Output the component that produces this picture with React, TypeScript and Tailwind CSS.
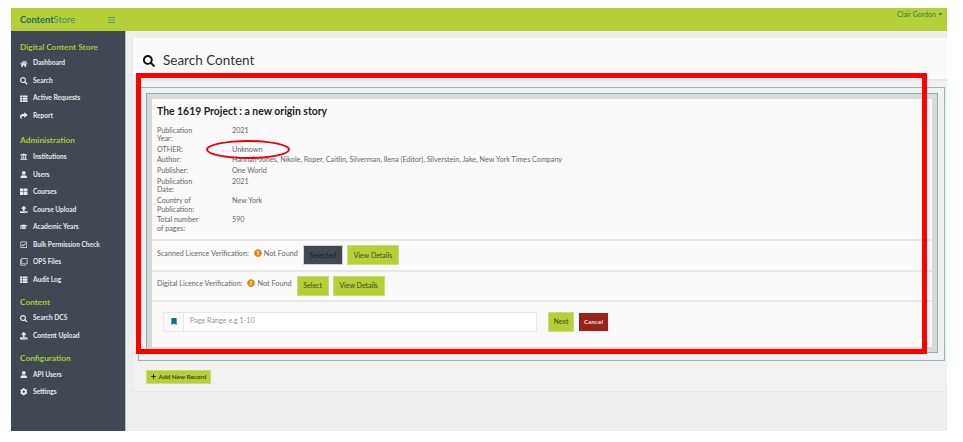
import {
  FaBars,
  FaBookmark,
  FaCaretDown,
  FaCog,
  FaExclamationCircle,
  FaGraduationCap,
  FaHome,
  FaPlus,
  FaRegCheckSquare,
  FaRegClone,
  FaSearch,
  FaShare,
  FaThLarge,
  FaThList,
  FaUniversity,
  FaUpload,
  FaUser,
} from 'react-icons/fa'
import type { IconType } from 'react-icons'

type NavItem = { icon: IconType; label: string }
type NavGroup = { title: string; items: NavItem[] }

const groups: NavGroup[] = [
  {
    title: 'Digital Content Store',
    items: [
      { icon: FaHome, label: 'Dashboard' },
      { icon: FaSearch, label: 'Search' },
      { icon: FaThList, label: 'Active Requests' },
      { icon: FaShare, label: 'Report' },
    ],
  },
  {
    title: 'Administration',
    items: [
      { icon: FaUniversity, label: 'Institutions' },
      { icon: FaUser, label: 'Users' },
      { icon: FaThLarge, label: 'Courses' },
      { icon: FaUpload, label: 'Course Upload' },
      { icon: FaGraduationCap, label: 'Academic Years' },
      { icon: FaRegCheckSquare, label: 'Bulk Permission Check' },
      { icon: FaRegClone, label: 'OPS Files' },
      { icon: FaThList, label: 'Audit Log' },
    ],
  },
  {
    title: 'Content',
    items: [
      { icon: FaSearch, label: 'Search DCS' },
      { icon: FaUpload, label: 'Content Upload' },
    ],
  },
  {
    title: 'Configuration',
    items: [
      { icon: FaUser, label: 'API Users' },
      { icon: FaCog, label: 'Settings' },
    ],
  },
]

const details: [string, string][] = [
  ['Publication Year:', '2021'],
  ['OTHER:', 'Unknown'],
  ['Author:', 'Hannah-Jones, Nikole, Roper, Caitlin, Silverman, Ilena (Editor), Silverstein, Jake, New York Times Company'],
  ['Publisher:', 'One World'],
  ['Publication Date:', '2021'],
  ['Country of Publication:', 'New York'],
  ['Total number of pages:', '590'],
]

function Sidebar() {
  return (
    <aside className="w-[115px] shrink-0 bg-[#3f4853] border-r border-[#b9bdc0] pt-[7.5px] pl-[9px]">
      {groups.map((group) => (
        <div key={group.title} className="mb-[5.25px] first:mb-[7.75px]">
          <h3 className="h-[16px] leading-[16px] text-[8.3px] font-bold text-[#a9c93a]">{group.title}</h3>
          <ul>
            {group.items.map((item) => (
              <li key={item.label} className="flex h-[17.5px] items-center text-[6.6px] font-bold text-[#e8eaec]">
                <span className="flex w-[13px] shrink-0">
                  <item.icon className="h-[7.5px] w-[7.5px]" />
                </span>
                {item.label}
              </li>
            ))}
          </ul>
        </div>
      ))}
    </aside>
  )
}

function GreenButton({ children, className }: { children: React.ReactNode; className: string }) {
  return (
    <button className={`h-[20px] bg-[#b5cf38] border border-[#cbdc77] text-[7px] text-[#3d4a1c] ${className}`}>
      {children}
    </button>
  )
}

function NotFound() {
  return (
    <span className="ml-[5px] flex items-center text-[7.3px] text-[#666]">
      <FaExclamationCircle className="mr-[2px] mb-[3px] h-[8px] w-[8px] text-[#e08a0b]" />
      Not Found
    </span>
  )
}

function RecordCard() {
  return (
    <div className="border border-[#86b3ba] bg-[#d9d9d9] px-[5px] pt-[5px] pb-[5px]">
      <div className="bg-[#fafafa]">
        <div className="border-b-2 border-[#e7e7e7] px-[5px] pb-[5px]">
          <h2 className="pt-[6px] text-[10.4px] leading-[13px] font-bold text-[#222]">
            The 1619 Project : a new origin story
          </h2>
          <dl className="mt-[8.5px] grid grid-cols-[75px_1fr] gap-y-[2.1px] text-[7.2px] leading-[8.6px] text-[#666]">
            {details.map(([label, value]) => (
              <div key={label} className="contents">
                <dt className="pr-[28px]">{label}</dt>
                <dd>{value}</dd>
              </div>
            ))}
          </dl>
        </div>

        <div className="flex h-[31px] items-center border-b-2 border-[#e7e7e7] pl-[5px] text-[7.2px] text-[#666]">
          <span className="mb-[2px] flex items-center">
            Scanned Licence Verification:
            <NotFound />
          </span>
          <button className="ml-[5px] h-[20px] w-[40px] border border-[#cfd3d6] bg-[#3f4853] text-[7px] text-[#222]">
            Selected
          </button>
          <GreenButton className="ml-[4px] w-[52px]">View Details</GreenButton>
        </div>

        <div className="flex h-[30px] items-center border-b-2 border-[#e7e7e7] pl-[5px] text-[7.2px] text-[#666]">
          <span className="mb-[2px] flex items-center">
            Digital Licence Verification:
            <NotFound />
          </span>
          <GreenButton className="ml-[5px] w-[32px]">Select</GreenButton>
          <GreenButton className="ml-[4px] w-[52px]">View Details</GreenButton>
        </div>

        <div className="flex items-center pt-[10px] pb-[15px] pl-[11px]">
          <div className="flex h-[20px] w-[374px] border border-[#e9e9e9] bg-white">
            <span className="flex w-[20px] items-center justify-center border-r border-[#e9e9e9] bg-[#fafafa]">
              <FaBookmark className="h-[7px] w-[6px] text-[#126c86]" />
            </span>
            <span className="flex items-center pl-[6px] text-[7.2px] text-[#999]">Page Range e.g 1-10</span>
          </div>
          <GreenButton className="ml-[11px] w-[26px] text-[6.4px]">Next</GreenButton>
          <button className="ml-[4px] h-[20px] w-[31px] border border-[#eee] bg-[#97231a] text-[6.4px] font-bold text-[#f3dcd8]">
            Cancel
          </button>
        </div>
      </div>
    </div>
  )
}

export default function App() {
  return (
    <div className="relative h-[442px] w-[963px] overflow-hidden bg-white pt-[8px] pr-[16px] pb-[11px] pl-[11px] font-['Lato',sans-serif]">
      <div className="flex h-full flex-col">
        <header className="flex h-[23px] shrink-0 items-start justify-between bg-[#b5cf38] pl-[9px]">
          <div className="flex h-[23px] items-center">
            <span className="w-[87px] text-[9.3px] text-[#1f6a63]">
              <span className="font-bold">Content</span>
              <span className="text-[#3f8a6e]">Store</span>
            </span>
            <FaBars className="h-[8px] w-[9px] text-[#4f9a62]" />
          </div>
          <div className="flex items-center pt-[1px] pr-[4px] text-[7px] leading-[10px] text-[#2f7a5c]">
            Clair Gordon
            <FaCaretDown className="ml-[2px] h-[6px] w-[5px] text-[#3f6a4c]" />
          </div>
        </header>

        <div className="flex min-h-0 flex-1">
          <Sidebar />
          <main className="flex-1 bg-[#eeeeee] pt-[7px] pl-[6px]">
            <section className="border border-t-0 border-r-0 border-[#e6e6e6] bg-[#f1f1f1] pr-[2px] pb-[7px] pl-[5px]">
              <div className="-mr-[2px] -ml-[5px] flex h-[43px] items-center border-b-2 border-[#e6e6e6] bg-[#fafafa] pt-[4px] pl-[10px]">
                <FaSearch className="mr-[8px] h-[12px] w-[12px] text-[#111]" />
                <h1 className="text-[13.5px] text-[#333]">Search Content</h1>
              </div>
              <div className="mt-[6px] border border-[#8fb8bf] bg-[#f1f1f1] pt-[5px] pr-[6px] pb-[7px] pl-[7px]">
                <RecordCard />
              </div>
              <button className="mt-[9px] ml-[8px] flex h-[14px] w-[65px] items-center justify-center border border-[#cbdc77] bg-[#b5cf38] text-[6.4px] font-bold text-[#3d4a1c]">
                <FaPlus className="mr-[3px] h-[5px] w-[5px] text-[#111]" />
                Add New Record
              </button>
            </section>
          </main>
        </div>
      </div>

      {/* annotations drawn on top of the screenshot */}
      <div className="pointer-events-none absolute top-[73px] left-[136px] h-[281px] w-[791px] border-[5px] border-[#ff0000]" />
      <div className="pointer-events-none absolute top-[140px] left-[206px] h-[19px] w-[84px] rounded-[50%] border-2 border-[#e8000f]" />
    </div>
  )
}
